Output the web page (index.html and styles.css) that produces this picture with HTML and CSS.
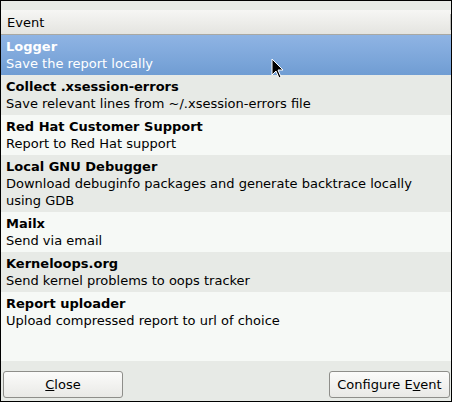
FILE: index.html
```html
<!DOCTYPE html>
<html>
<head>
<meta charset="utf-8">
<link rel="stylesheet" href="styles.css">
</head>
<body>
<div class="window">
  <div class="top-gap"></div>
  <div class="list">
    <div class="header"><span class="header-label">Event</span><span class="header-sep"></span></div>
    <div class="row selected"><div class="title">Logger</div><div class="desc">Save the report locally</div></div>
    <div class="row odd"><div class="title">Collect .xsession-errors</div><div class="desc">Save relevant lines from ~/.xsession-errors file</div></div>
    <div class="row"><div class="title">Red Hat Customer Support</div><div class="desc">Report to Red Hat support</div></div>
    <div class="row odd"><div class="title">Local GNU Debugger</div><div class="desc">Download debuginfo packages and generate backtrace locally using GDB</div></div>
    <div class="row"><div class="title">Mailx</div><div class="desc">Send via email</div></div>
    <div class="row odd"><div class="title">Kerneloops.org</div><div class="desc">Send kernel problems to oops tracker</div></div>
    <div class="row"><div class="title">Report uploader</div><div class="desc">Upload compressed report to url of choice</div></div>
  </div>
  <div class="footer">
    <button class="btn btn-close"><u>C</u>lose</button>
    <button class="btn btn-config">Configure E<u>v</u>ent</button>
  </div>
  <svg class="cursor" width="14" height="22" viewBox="0 0 14 22">
    <path d="M1 1 L1 17 L5 13 L8 20 L10 19 L7 12 L12 12 Z" fill="#000" stroke="#fff" stroke-width="1"/>
  </svg>
</div>
</body>
</html>
```

FILE: styles.css
```css
* { box-sizing: border-box; }
html, body { margin: 0; padding: 0; }
body {
  font-family: "DejaVu Sans", "Liberation Sans", sans-serif;
  font-size: 13px;
  color: #000;
  background: #e7eae6;
}
.window {
  position: relative;
  width: 452px;
  height: 402px;
  border: 1px solid #000;
  background: #e7eae6;
  display: flex;
  flex-direction: column;
}
.top-gap { height: 9px; flex: none; }
.list {
  flex: 1;
  background: #f6f9f6;
  display: flex;
  flex-direction: column;
}
.header {
  height: 25px;
  flex: none;
  background: linear-gradient(#f6f6f4, #e4e4e0);
  border-bottom: 1px solid #a8a8a3;
  display: flex;
  align-items: center;
  justify-content: space-between;
  padding-left: 6px;
}
.header-label { line-height: 16px; padding-top: 1px; }
.header-sep {
  width: 1px;
  height: 16px;
  background: #b8b8b4;
  margin-right: 0;
}
.row {
  padding: 3px 5px;
  line-height: 17px;
}
.row.odd { background: #e7eae6; }
.row.selected {
  background: linear-gradient(#8fb4e4, #709dd3);
  color: #fff;
}
.title { font-weight: bold; }
.footer {
  height: 40px;
  flex: none;
  display: flex;
  justify-content: space-between;
  align-items: flex-start;
  padding: 10px 1px 0 2px;
}
.btn {
  font-family: "DejaVu Sans", "Liberation Sans", sans-serif;
  font-size: 13px;
  color: #000;
  height: 27px;
  border: 1px solid #8e8e8a;
  border-radius: 3px;
  background: linear-gradient(#fbfbfa, #e9e9e6);
  padding: 0;
  line-height: 25px;
}
.btn-close { width: 120px; }
.btn-config { width: 121px; }
.cursor {
  position: absolute;
  left: 270px;
  top: 57px;
}
```
